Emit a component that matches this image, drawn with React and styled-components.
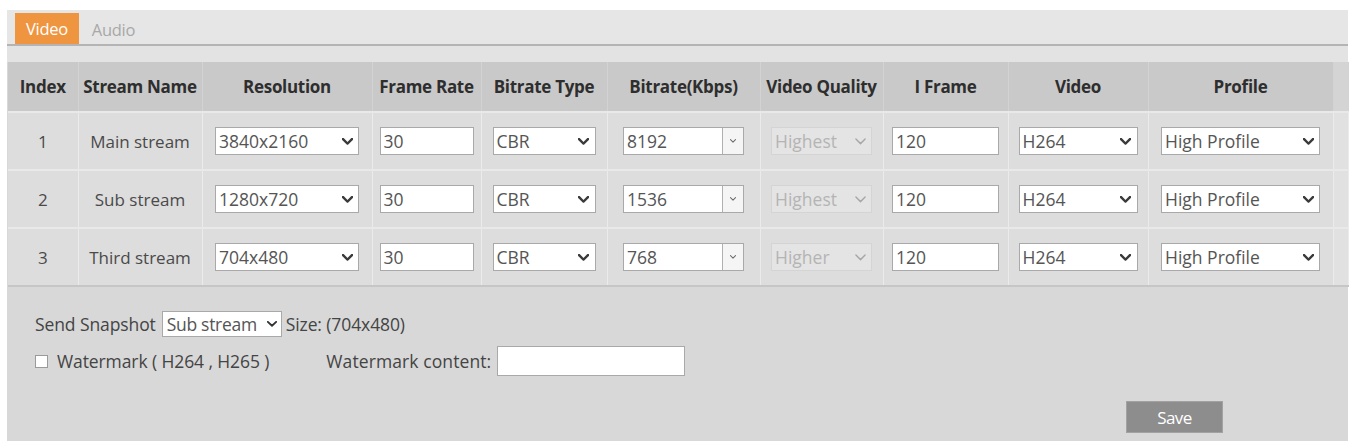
import React from "react";
import styled, { createGlobalStyle } from "styled-components";

const Global = createGlobalStyle`
  html, body { margin: 0; padding: 0; background: #ffffff; }
  body { font-family: "Open Sans", "Noto Sans", sans-serif; }
  * { box-sizing: border-box; }
`;

const Panel = styled.div`
  margin: 10px 0 0 7px;
  width: 1341px;
  height: 431px;
  background: #d8d8d8;
  display: flex;
  flex-direction: column;
`;

const TabBar = styled.div`
  height: 36px;
  background: #e6e6e6;
  border-bottom: 2px solid #b4b4b4;
  display: flex;
  align-items: flex-end;
  padding-left: 8px;
  gap: 13px;
`;

const Tab = styled.div`
  height: ${(p) => (p.$active ? "31px" : "30px")};
  padding: 0 ${(p) => (p.$active ? "11px" : "0")};
  display: flex;
  align-items: center;
  font-size: 16.5px;
  letter-spacing: -0.3px;
  background: ${(p) => (p.$active ? "#ef9540" : "transparent")};
  color: ${(p) => (p.$active ? "#ffffff" : "#a8a8a8")};
`;

const Band = styled.div`
  height: 16px;
  background: #e3e3e3;
`;

const Table = styled.table`
  border-collapse: collapse;
  table-layout: fixed;
  width: 1340px;
  margin-left: 1px;
`;

const HeadCell = styled.th`
  height: 50px;
  padding: 0;
  background: ${(p) => (p.$filler ? "#d4d4d4" : "#c9c9c9")};
  border-right: 1px solid #d3d3d3;
  font-size: 17px;
  font-weight: 700;
  letter-spacing: -0.3px;
  color: #2e2e2e;
  text-align: center;
  white-space: nowrap;
`;

const Row = styled.tr`
  height: 58px;
  background: #dddddd;
  border-top: 2px solid #e9e9e9;
  &:last-child { border-bottom: 2px solid #c6c6c6; }
`;

const Cell = styled.td`
  padding: 0;
  border-right: 1px solid #ebebeb;
  text-align: center;
  vertical-align: middle;
  font-size: 17px;
  color: #4a4a4a;
  white-space: nowrap;
  background: ${(p) => (p.$filler ? "#e1e1e1" : "transparent")};
`;

const Box = styled.div`
  display: inline-flex;
  align-items: center;
  width: ${(p) => p.$w}px;
  height: 28px;
  background: ${(p) => (p.$disabled ? "#e4e4e4" : "#ffffff")};
  border: 1px solid ${(p) => (p.$disabled ? "#d4d4d4" : "#a9a9a9")};
  font-size: 17.5px;
  color: ${(p) => (p.$disabled ? "#b4b4b4" : "#555555")};
  text-align: left;
  vertical-align: middle;
`;

const BoxText = styled.span`
  flex: 1;
  padding-left: 3px;
  overflow: hidden;
`;

const ArrowWrap = styled.span`
  width: 22px;
  display: flex;
  justify-content: center;
  align-items: center;
`;

const ComboButton = styled.span`
  width: 21px;
  height: 100%;
  border-left: 1px solid #b0b0b0;
  background: #f5f5f5;
  display: flex;
  align-items: center;
  justify-content: center;
`;

const Chevron = ({ color = "#333", w = 12, h = 7, sw = 2.2 }) => (
  <svg width={w} height={h} viewBox="0 0 12 7" preserveAspectRatio="none">
    <polyline
      points="1,1 6,5.6 11,1"
      fill="none"
      stroke={color}
      strokeWidth={sw}
      strokeLinecap="round"
      strokeLinejoin="round"
    />
  </svg>
);

const Select = ({ w, value, disabled }) => (
  <Box $w={w} $disabled={disabled}>
    <BoxText>{value}</BoxText>
    <ArrowWrap>
      <Chevron color={disabled ? "#a6a6a6" : "#3a3a3a"} sw={disabled ? 1.5 : 2.4} w={11} h={7} />
    </ArrowWrap>
  </Box>
);

const Input = ({ w, value }) => (
  <Box $w={w}>
    <BoxText>{value}</BoxText>
  </Box>
);

const Combo = ({ w, value }) => (
  <Box $w={w}>
    <BoxText>{value}</BoxText>
    <ComboButton>
      <Chevron color="#666" w={6} h={4} sw={2} />
    </ComboButton>
  </Box>
);

const Bottom = styled.div`
  flex: 1;
  display: flex;
  flex-direction: column;
  padding: 24px 0 0 28px;
  font-family: "Open Sans", sans-serif;
  font-size: 17.5px;
  letter-spacing: -0.1px;
  color: #444;
`;

const Line = styled.div`
  display: flex;
  align-items: center;
  height: ${(p) => p.$h}px;
  margin-top: ${(p) => p.$mt || 0}px;
`;

const SmallSelect = styled.div`
  display: flex;
  align-items: center;
  justify-content: space-between;
  width: 120px;
  height: 26px;
  margin: 0 4px 0 6px;
  padding: 0 4px 0 4px;
  background: #fff;
  border: 1px solid #a9a9a9;
  color: #555;
  letter-spacing: -0.3px;
`;

const Check = styled.span`
  width: 13px;
  height: 13px;
  background: #fff;
  border: 1px solid #9a9a9a;
  margin-right: 9px;
`;

const Label = styled.span`
  letter-spacing: ${(p) => p.$ls || "-0.1px"};
`;

const ContentInput = styled.div`
  width: 188px;
  height: 30px;
  margin-left: 6px;
  background: #fff;
  border: 1px solid #a9a9a9;
`;

const Spacer = styled.span`
  width: ${(p) => p.$w}px;
`;

const SaveRow = styled.div`
  display: flex;
  justify-content: flex-end;
  padding-right: 125px;
  margin-top: 25px;
`;

const SaveButton = styled.button`
  width: 97px;
  height: 32px;
  background: #8d8d8d;
  border: 1px solid #a2a2a2;
  color: #fff;
  font-family: "Open Sans", sans-serif;
  font-size: 17px;
  letter-spacing: -0.6px;
  padding: 0;
`;

const cols = [70, 124, 170, 109, 126, 153, 123, 125, 140, 185, 15];
const headers = [
  "Index",
  "Stream Name",
  "Resolution",
  "Frame Rate",
  "Bitrate Type",
  "Bitrate(Kbps)",
  "Video Quality",
  "I Frame",
  "Video",
  "Profile",
];

const rows = [
  ["1", "Main stream", "3840x2160", "8192", "Highest"],
  ["2", "Sub stream", "1280x720", "1536", "Highest"],
  ["3", "Third stream", "704x480", "768", "Higher"],
];

export default function App() {
  return (
    <>
      <Global />
      <Panel>
        <TabBar>
          <Tab $active>Video</Tab>
          <Tab>Audio</Tab>
        </TabBar>
        <Band />
        <Table>
          <colgroup>
            {cols.map((w, i) => (
              <col key={i} style={{ width: w }} />
            ))}
          </colgroup>
          <thead>
            <tr>
              {headers.map((h) => (
                <HeadCell key={h}>{h}</HeadCell>
              ))}
              <HeadCell $filler />
            </tr>
          </thead>
          <tbody>
            {rows.map(([idx, name, res, br, q]) => (
              <Row key={idx}>
                <Cell>{idx}</Cell>
                <Cell>{name}</Cell>
                <Cell>
                  <Select w={144} value={res} />
                </Cell>
                <Cell>
                  <Input w={94} value="30" />
                </Cell>
                <Cell>
                  <Select w={103} value="CBR" />
                </Cell>
                <Cell>
                  <Combo w={121} value={br} />
                </Cell>
                <Cell>
                  <Select w={101} value={q} disabled />
                </Cell>
                <Cell>
                  <Input w={107} value="120" />
                </Cell>
                <Cell>
                  <Select w={119} value="H264" />
                </Cell>
                <Cell>
                  <Select w={159} value="High Profile" />
                </Cell>
                <Cell $filler />
              </Row>
            ))}
          </tbody>
        </Table>
        <Bottom>
          <Line $h={26}>
            Send Snapshot
            <SmallSelect>
              Sub stream
              <Chevron color="#333" w={10} h={6} sw={2.2} />
            </SmallSelect>
            Size: (704x480)
          </Line>
          <Line $h={30} $mt={9}>
            <Check />
            Watermark ( H264 , H265 )
            <Spacer $w={57} />
            <Label $ls="0.1px">Watermark content:</Label>
            <ContentInput />
          </Line>
          <SaveRow>
            <SaveButton>Save</SaveButton>
          </SaveRow>
        </Bottom>
      </Panel>
    </>
  );
}
